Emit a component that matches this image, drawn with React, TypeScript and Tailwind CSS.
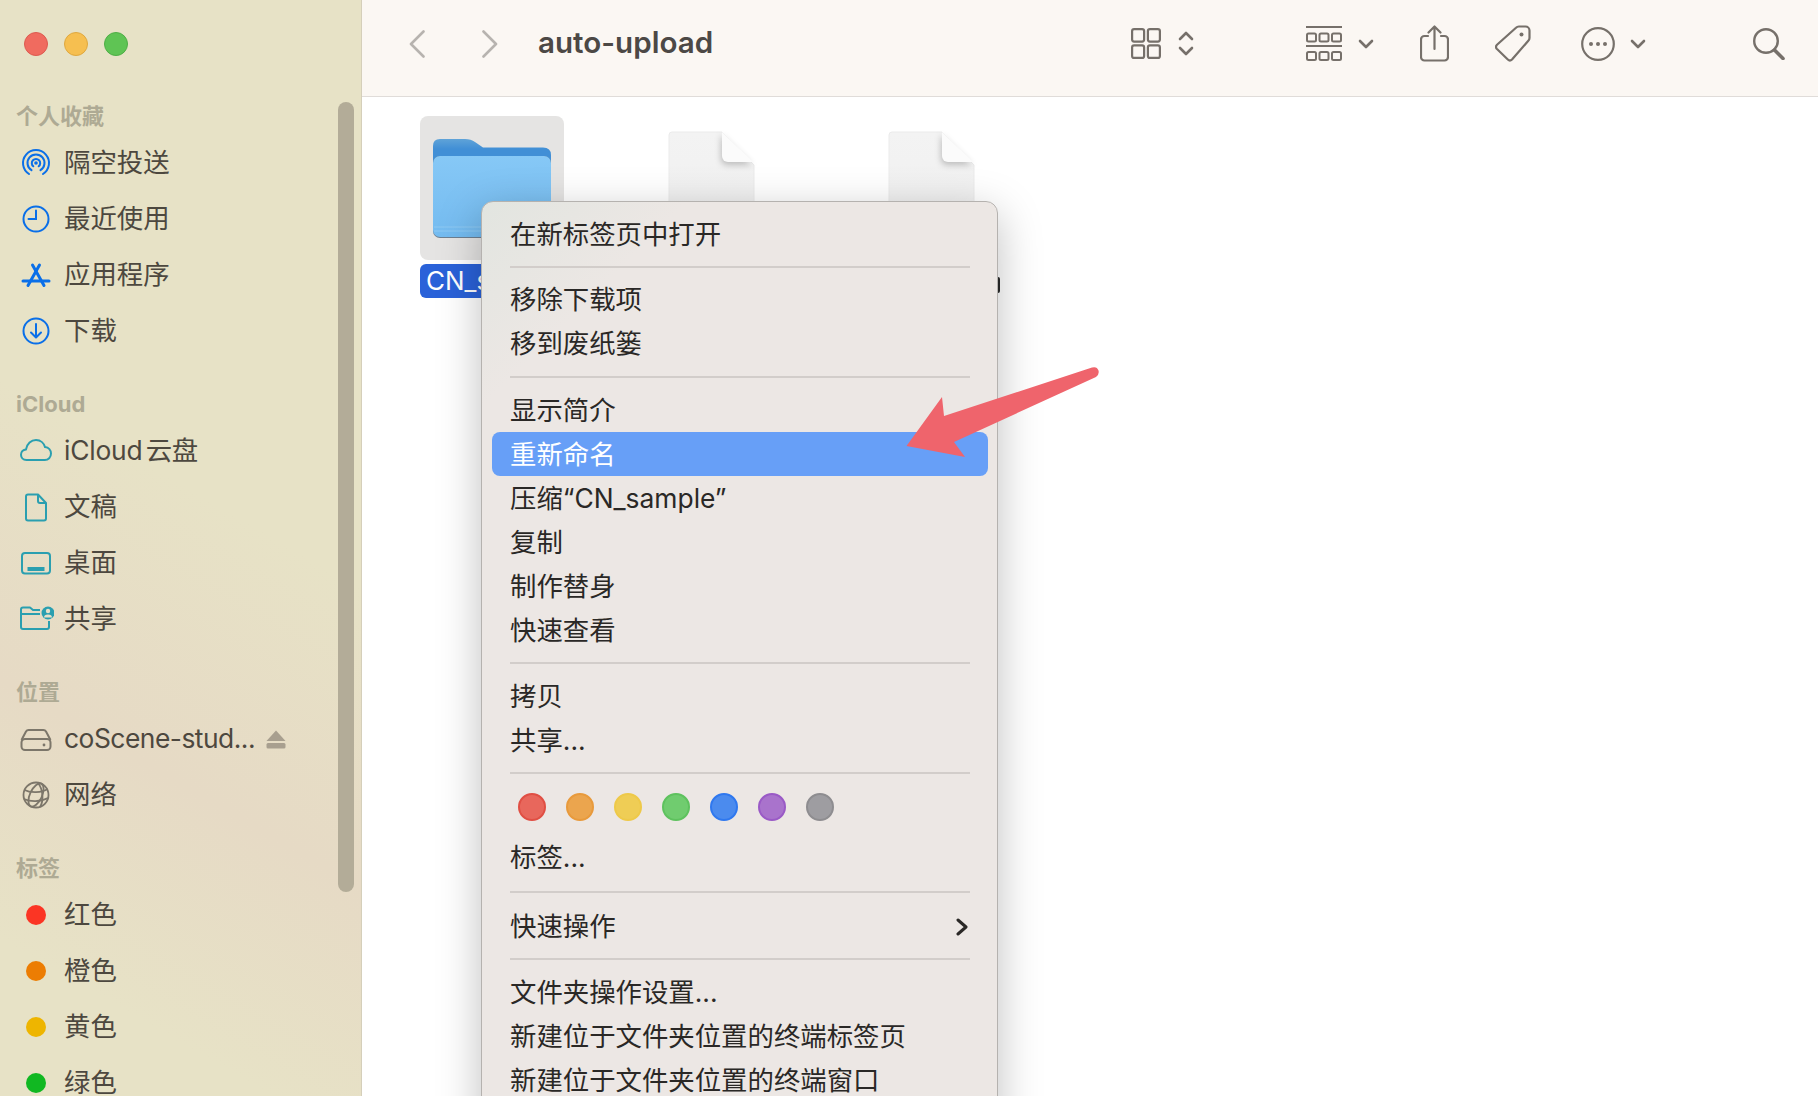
import React from "react";

const FONT = "font-['Inter','Noto_Sans_CJK_SC',sans-serif]";

function AirDrop() {
  return (
    <svg width="36" height="36" viewBox="0 0 36 36" fill="none" stroke="#0a6fe8" strokeWidth="2" strokeLinecap="round">
      <path d="M11 29A13 13 0 1 1 25 29" />
      <path d="M13.5 25.2A8.5 8.5 0 1 1 22.5 25.2" />
      <path d="M15.3 21.3A4.2 4.2 0 1 1 20.7 21.3" />
      <circle cx="18" cy="18" r="1.8" fill="#0a6fe8" stroke="none" />
    </svg>
  );
}
function Clock() {
  return (
    <svg width="36" height="36" viewBox="0 0 36 36" fill="none" stroke="#0a6fe8" strokeWidth="2" strokeLinecap="round">
      <circle cx="18" cy="18" r="12.5" />
      <path d="M18 9.5V18H10.5" />
    </svg>
  );
}
function AppStore() {
  return (
    <svg width="36" height="36" viewBox="0 0 36 36" fill="none" stroke="#0a6fe8" strokeWidth="3" strokeLinecap="round">
      <path d="M21.5 8L10 28.5" />
      <path d="M14.5 8L26 28.5" />
      <path d="M5 24H31" />
    </svg>
  );
}
function Download() {
  return (
    <svg width="36" height="36" viewBox="0 0 36 36" fill="none" stroke="#0a6fe8" strokeWidth="2" strokeLinecap="round" strokeLinejoin="round">
      <circle cx="18" cy="18" r="12.5" />
      <path d="M18 11V24M13 19.5L18 24.5L23 19.5" />
    </svg>
  );
}
const TEAL = "#2a9fb0";
function Cloud() {
  return (
    <svg width="36" height="36" viewBox="0 0 36 36" fill="none" stroke={TEAL} strokeWidth="2">
      <path d="M8.5 27C4.8 27 3 24.3 3 21.8C3 18.8 5.2 16.6 8 16.4C9 10.8 13.2 7 18 7C22.8 7 26 10.4 27 14C30.6 14.5 33 17.3 33 20.6C33 24.3 30.3 27 26.8 27Z" />
    </svg>
  );
}
function Doc() {
  return (
    <svg width="36" height="36" viewBox="0 0 36 36" fill="none" stroke={TEAL} strokeWidth="2" strokeLinejoin="round">
      <path d="M10 5.5H20L28 14V29.5a2 2 0 0 1-2 2H10a2 2 0 0 1-2-2V7.5a2 2 0 0 1 2-2Z" />
      <path d="M20 5.5V12a2 2 0 0 0 2 2H28" />
    </svg>
  );
}
function Desktop() {
  return (
    <svg width="36" height="36" viewBox="0 0 36 36" fill="none" stroke={TEAL} strokeWidth="2">
      <rect x="4" y="8" width="28" height="20.5" rx="3" />
      <rect x="9.5" y="22" width="17" height="4" fill={TEAL} stroke="none" />
    </svg>
  );
}
function Shared() {
  return (
    <svg width="36" height="36" viewBox="0 0 36 36" fill="none" stroke={TEAL} strokeWidth="2" strokeLinejoin="round">
      <path d="M22 9H15L12 6.5H5a2 2 0 0 0-2 2V26a2 2 0 0 0 2 2H29a2 2 0 0 0 2-2V20" />
      <path d="M3 13H22" />
      <circle cx="30" cy="12" r="6.5" fill={TEAL} stroke="none" />
      <circle cx="30" cy="10" r="2.2" fill="#e7e0c8" stroke="none" />
      <path d="M26 16.5a4 3 0 0 1 8 0Z" fill="#e7e0c8" stroke="none" />
    </svg>
  );
}
const GRAY = "#7c766a";
function Drive() {
  return (
    <svg width="36" height="36" viewBox="0 0 36 36" fill="none" stroke={GRAY} strokeWidth="2" strokeLinejoin="round">
      <path d="M3.5 19L8 10.5a3 3 0 0 1 2.6-1.5H25.4a3 3 0 0 1 2.6 1.5L32.5 19" />
      <rect x="3.5" y="18" width="29" height="11" rx="3.5" />
      <circle cx="26" cy="24" r="1.4" fill={GRAY} stroke="none" />
    </svg>
  );
}
function Globe() {
  return (
    <svg width="36" height="36" viewBox="0 0 36 36" fill="none" stroke={GRAY} strokeWidth="1.8">
      <circle cx="18" cy="18" r="12.5" />
      <ellipse cx="18" cy="18" rx="6" ry="12.5" transform="rotate(25 18 18)" />
      <path d="M6.5 13C12 16 24 16 29.5 12" />
      <path d="M6 22C12 25 23 25 30 21" />
      <path d="M20 6C25 12 26 24 22 30" />
    </svg>
  );
}
function Eject() {
  return (
    <svg width="20" height="19" viewBox="0 0 20 19" fill="#a89f8f" className="ml-auto mr-[75px]">
      <path d="M10 0.5L19.5 11H0.5Z" />
      <rect x="0.5" y="13" width="19" height="5.5" rx="1.5" />
    </svg>
  );
}

function TagDot({ color }: { color: string }) {
  return (
    <div className="flex h-9 w-9 items-center justify-center">
      <div className="h-5 w-5 rounded-full" style={{ backgroundColor: color }} />
    </div>
  );
}

function SideRow({ icon, label, extra, textClass }: { icon: React.ReactNode; label: string; extra?: React.ReactNode; textClass?: string }) {
  return (
    <div className="flex h-14 items-center pl-[18px]">
      <div className="h-9 w-9 shrink-0">{icon}</div>
      <span className={`ml-[10px] whitespace-nowrap pb-[2px] text-[26.4px] leading-none text-[#4d483f] ${textClass ?? ""}`}>{label}</span>
      {extra}
    </div>
  );
}

function SideHead({ label, className }: { label: string; className: string }) {
  return (
    <div className={`flex h-7 items-center pl-4 text-[22px] font-bold leading-none text-[#aeaa94] ${className}`}>{label}</div>
  );
}

function Sidebar() {
  return (
    <aside className="relative h-full w-[362px] shrink-0 border-r border-[#d5cfba] bg-[linear-gradient(210deg,#e7e2c6_0%,#e7e2c6_45%,#e6dac5_68%,#e7e2c6_88%,#e7e2c6_100%)]">
      <div className="flex gap-4 pl-6 pt-8">
        <div className="h-6 w-6 rounded-full border border-[#dd5a50] bg-[#f06b5f]" />
        <div className="h-6 w-6 rounded-full border border-[#dfa83f] bg-[#f6bf50]" />
        <div className="h-6 w-6 rounded-full border border-[#4fae46] bg-[#5fc454]" />
      </div>
      <SideHead label="个人收藏" className="mt-[46px] mb-[5px]" />
      <SideRow icon={<AirDrop />} label="隔空投送" />
      <SideRow icon={<Clock />} label="最近使用" />
      <SideRow icon={<AppStore />} label="应用程序" />
      <SideRow icon={<Download />} label="下载" />
      <SideHead label="iCloud" className="mt-[31px] mb-[5px]" />
      <SideRow icon={<Cloud />} label="iCloud 云盘" textClass="[word-spacing:-4px] tracking-[-0.2px]" />
      <SideRow icon={<Doc />} label="文稿" />
      <SideRow icon={<Desktop />} label="桌面" />
      <SideRow icon={<Shared />} label="共享" />
      <SideHead label="位置" className="mt-[31px] mb-[5px]" />
      <SideRow icon={<Drive />} label="coScene-stud..." extra={<Eject />} textClass="tracking-[-0.5px]" />
      <SideRow icon={<Globe />} label="网络" />
      <SideHead label="标签" className="mt-[31px] mb-[5px]" />
      <SideRow icon={<TagDot color="#fb3524" />} label="红色" />
      <SideRow icon={<TagDot color="#ec7d03" />} label="橙色" />
      <SideRow icon={<TagDot color="#eeb500" />} label="黄色" />
      <SideRow icon={<TagDot color="#11b822" />} label="绿色" />
      <div className="absolute left-[338px] top-[102px] h-[790px] w-4 rounded-full bg-[#b3ac98]" />
    </aside>
  );
}

const T = "#76706a";

function Toolbar() {
  return (
    <header className="flex h-[97px] shrink-0 items-center border-b border-[#e0dcd9] bg-[#fbf7f3] pb-[9px] pt-0">
      <svg width="16" height="28" viewBox="0 0 16 28" fill="none" stroke="#b7b3af" strokeWidth="2.6" strokeLinecap="round" strokeLinejoin="round" className="ml-[47px]">
        <path d="M14.5 1.5L2 14L14.5 26.5" />
      </svg>
      <svg width="16" height="28" viewBox="0 0 16 28" fill="none" stroke="#b7b3af" strokeWidth="2.6" strokeLinecap="round" strokeLinejoin="round" className="ml-[57px]">
        <path d="M1.5 1.5L14 14L1.5 26.5" />
      </svg>
      <h1 className="-mt-[2px] ml-[40px] text-[29.6px] font-semibold leading-none text-[#4c4845]">auto-upload</h1>
      <div className="ml-auto flex items-center pr-[33px]">
        <svg width="30" height="31" viewBox="0 0 30 31" fill="none" stroke={T} strokeWidth="2.2">
          <rect x="1.1" y="1.1" width="12" height="12.5" rx="2" />
          <rect x="16.9" y="1.1" width="12" height="12.5" rx="2" />
          <rect x="1.1" y="17.4" width="12" height="12.5" rx="2" />
          <rect x="16.9" y="17.4" width="12" height="12.5" rx="2" />
        </svg>
        <svg width="16" height="25" viewBox="0 0 16 25" fill="none" stroke={T} strokeWidth="2.6" strokeLinecap="round" strokeLinejoin="round" className="ml-[17px]">
          <path d="M2 8L8 2L14 8M2 17L8 23L14 17" />
        </svg>
        <svg width="36" height="35" viewBox="0 0 36 35" fill="none" stroke={T} strokeWidth="2" className="ml-[112px]">
          <path d="M0 1H36M0 20H36" />
          <rect x="1" y="7.5" width="9" height="8" rx="1.5" />
          <rect x="13.5" y="7.5" width="9" height="8" rx="1.5" />
          <rect x="26" y="7.5" width="9" height="8" rx="1.5" />
          <rect x="1" y="26" width="9" height="8" rx="1.5" />
          <rect x="13.5" y="26" width="9" height="8" rx="1.5" />
          <rect x="26" y="26" width="9" height="8" rx="1.5" />
        </svg>
        <svg width="16" height="10" viewBox="0 0 16 10" fill="none" stroke={T} strokeWidth="2.6" strokeLinecap="round" strokeLinejoin="round" className="ml-4">
          <path d="M2 2L8 8L14 2" />
        </svg>
        <svg width="29" height="37" viewBox="0 0 29 37" fill="none" stroke={T} strokeWidth="2.2" strokeLinecap="round" strokeLinejoin="round" className="ml-[46px]">
          <path d="M8 11H4.5a3.5 3.5 0 0 0-3.5 3.5V32a3.5 3.5 0 0 0 3.5 3.5H24.5a3.5 3.5 0 0 0 3.5-3.5V14.5a3.5 3.5 0 0 0-3.5-3.5H21" />
          <path d="M14.5 24V2M8.5 7.5L14.5 1.5L20.5 7.5" />
        </svg>
        <svg width="36" height="37" viewBox="0 0 36 37" fill="none" stroke={T} strokeWidth="2.2" strokeLinejoin="round" className="ml-[46px]">
          <path d="M24 1.5H30.5a4 4 0 0 1 4 4V13a4 4 0 0 1-1.2 2.8L17 34.5a3 3 0 0 1-4.2 0L2 24a3 3 0 0 1 0-4.2L21 2.7A4 4 0 0 1 24 1.5Z" />
          <circle cx="26.5" cy="9.5" r="2" fill={T} stroke="none" />
        </svg>
        <svg width="34" height="34" viewBox="0 0 34 34" fill="none" stroke={T} strokeWidth="2.2" className="ml-[50px]">
          <circle cx="17" cy="17" r="15.8" />
          <circle cx="10" cy="17" r="2" fill={T} stroke="none" />
          <circle cx="17" cy="17" r="2" fill={T} stroke="none" />
          <circle cx="24" cy="17" r="2" fill={T} stroke="none" />
        </svg>
        <svg width="16" height="10" viewBox="0 0 16 10" fill="none" stroke={T} strokeWidth="2.6" strokeLinecap="round" strokeLinejoin="round" className="ml-[15px]">
          <path d="M2 2L8 8L14 2" />
        </svg>
        <svg width="32" height="32" viewBox="0 0 32 32" fill="none" stroke={T} className="ml-[107px]">
          <circle cx="13" cy="13" r="11.8" strokeWidth="2.4" />
          <path d="M21.5 22L30 30.5" strokeWidth="3.6" strokeLinecap="round" />
        </svg>
      </div>
    </header>
  );
}

function Folder() {
  return (
    <svg width="118" height="100" viewBox="0 0 118 100">
      <defs>
        <linearGradient id="fb" x1="0" y1="0" x2="0" y2="1">
          <stop offset="0" stopColor="#5fa3d8" />
          <stop offset="0.2" stopColor="#418fd6" />
        </linearGradient>
        <linearGradient id="ff" x1="0" y1="0" x2="0" y2="1">
          <stop offset="0" stopColor="#86c8f6" />
          <stop offset="1" stopColor="#74bbf0" />
        </linearGradient>
      </defs>
      <path d="M7 0H32Q38 0 42 3L50 8.5H110Q118 8.5 118 16V50H0V7Q0 0 7 0Z" fill="url(#fb)" />
      <rect x="0" y="17" width="118" height="82" rx="7" fill="#6d7f91" />
      <rect x="0" y="17" width="118" height="81" rx="7" fill="url(#ff)" />
      <path d="M1 88H117M1 92H117" stroke="#8ec9f3" strokeWidth="1" />
    </svg>
  );
}

function FileIcon({ id }: { id: string }) {
  return (
    <svg width="87" height="120" viewBox="0 0 87 120" className="-ml-px overflow-visible">
      <defs>
        <linearGradient id={id} x1="0" y1="0" x2="0" y2="1">
          <stop offset="0" stopColor="#f3f3f3" />
          <stop offset="1" stopColor="#efefef" />
        </linearGradient>
      </defs>
      <path d="M4 1H54L86 34V116a3 3 0 0 1-3 3H4a3 3 0 0 1-3-3V4a3 3 0 0 1 3-3Z" fill={`url(#${id})`} stroke="#ebebeb" />
      <path
        d="M54 1V25a6 6 0 0 0 6 6H85Z"
        fill="#fbfbfb"
        className="drop-shadow-[-1px_3px_3px_rgba(0,0,0,0.22)]"
      />
    </svg>
  );
}

function FileGrid() {
  return (
    <main className="flex flex-1 bg-white pl-5">
      <div className="flex w-[220px] flex-col items-center pt-[19px]">
        <div className="flex h-[144px] w-[144px] items-center justify-center rounded-lg bg-[#e5e4e3] pt-[2px]">
          <Folder />
        </div>
        <div className="mt-1 h-[34px] w-[144px] rounded-md bg-[#2a62d9] pl-[6px] text-[26px] leading-[34px] text-white">CN_s</div>
      </div>
      <div className="flex w-[220px] flex-col items-center pt-[34px]">
        <FileIcon id="pg1" />
      </div>
      <div className="flex w-[220px] flex-col items-center pt-[34px]">
        <FileIcon id="pg2" />
        <div className="mt-[26px] flex h-4 w-[136px] justify-end">
          <div className="h-4 w-[2px] rounded-r-sm bg-[#2b2b2b]" />
        </div>
      </div>
    </main>
  );
}

function Item({ label, active, chevron }: { label: string; active?: boolean; chevron?: boolean }) {
  return (
    <div className={`ml-[10px] mr-[9px] flex h-11 items-center justify-between rounded-lg pl-[18px] pr-[20px] text-[26.4px] leading-none ${active ? "-mt-px mb-px bg-[#679ff7] text-white" : "pb-[2px] text-[#2a2826]"}`}>
      <span className="whitespace-nowrap">{label}</span>
      {chevron && (
        <svg width="12" height="18" viewBox="0 0 12 18" fill="none" stroke="#2a2826" strokeWidth="3" strokeLinecap="round" strokeLinejoin="round" className="translate-y-px">
          <path d="M2 2L10 9L2 16" />
        </svg>
      )}
    </div>
  );
}

function Sep({ h }: { h: string }) {
  return (
    <div className={`ml-[28px] mr-[27px] flex items-center pb-[2px] ${h}`}>
      <div className="h-[2px] w-full bg-[#d2cdca]" />
    </div>
  );
}

const TAGS: [string, string][] = [
  ["#e8675c", "#e04f44"],
  ["#eba54e", "#e89a3c"],
  ["#efcd55", "#eec949"],
  ["#70cc6f", "#5ec25e"],
  ["#4b8bee", "#2f78ef"],
  ["#a973cc", "#9a5ac6"],
  ["#9e9da1", "#8e8d90"],
];

function ContextMenu() {
  return (
    <div className="absolute left-[481px] top-[201px] h-[960px] w-[517px] rounded-xl border border-[#b5b2af] bg-[linear-gradient(135deg,#e2e5e0_0%,#ece7e4_14%)] pt-[11px] shadow-[0_12px_44px_rgba(0,0,0,0.25)]">
      <Item label="在新标签页中打开" />
      <Sep h="h-[21px]" />
      <Item label="移除下载项" />
      <Item label="移到废纸篓" />
      <Sep h="h-[23px]" />
      <Item label="显示简介" />
      <Item label="重新命名" active />
      <Item label="压缩“CN_sample”" />
      <Item label="复制" />
      <Item label="制作替身" />
      <Item label="快速查看" />
      <Sep h="h-[22px]" />
      <Item label="拷贝" />
      <Item label="共享..." />
      <Sep h="h-[22px]" />
      <div className="flex h-[51px] items-start gap-5 pl-[36px] pt-[8px]">
        {TAGS.map(([fill, border]) => (
          <div key={fill} className="h-7 w-7 rounded-full border-2" style={{ backgroundColor: fill, borderColor: border }} />
        ))}
      </div>
      <Item label="标签..." />
      <Sep h="h-[25px]" />
      <Item label="快速操作" chevron />
      <Sep h="h-[22px]" />
      <Item label="文件夹操作设置..." />
      <Item label="新建位于文件夹位置的终端标签页" />
      <Item label="新建位于文件夹位置的终端窗口" />
    </div>
  );
}

function Arrow() {
  return (
    <svg width="205" height="105" viewBox="0 0 205 105" className="absolute left-[900px] top-[360px]">
      <path
        d="M6.5 86L42 37L44 56L192 7.5Q197 6 198.5 10.5Q199.5 14.5 196 17L54 82L65 97Z"
        fill="#ef646c"
      />
    </svg>
  );
}

export default function App() {
  return (
    <div lang="zh-CN" className={`relative flex h-[1096px] w-[1818px] overflow-hidden bg-white ${FONT}`}>
      <Sidebar />
      <div className="flex h-full flex-1 flex-col">
        <Toolbar />
        <FileGrid />
      </div>
      <ContextMenu />
      <Arrow />
    </div>
  );
}
